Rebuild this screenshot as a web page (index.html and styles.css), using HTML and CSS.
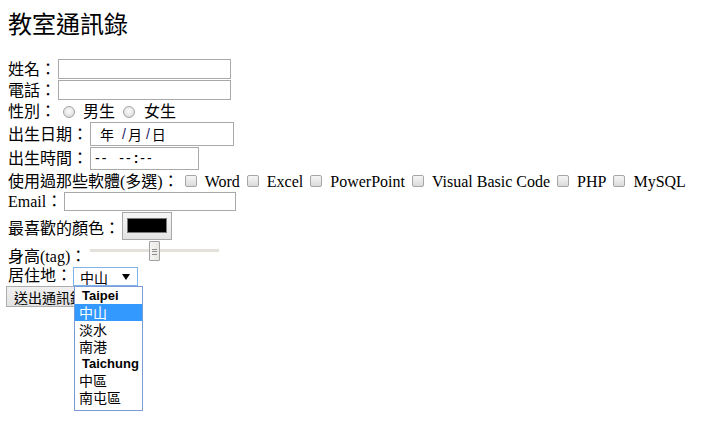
FILE: index.html
```html
<!DOCTYPE html>
<html lang="zh-Hant">
<head>
<meta charset="utf-8">
<title>教室通訊錄</title>
<link rel="stylesheet" href="styles.css">
</head>
<body>
<form class="page">
  <h2 class="title">教室通訊錄</h2>

  <div class="row row-name">
    <span class="lbl">姓名：</span><input class="text w-name" type="text">
  </div>
  <div class="row row-tel">
    <span class="lbl">電話：</span><input class="text w-name" type="text">
  </div>
  <div class="row row-sex">
    <span class="lbl">性別：</span>
    <span class="radio radio-first"></span><span class="lbl">男生</span>
    <span class="radio radio-next"></span><span class="lbl">女生</span>
  </div>
  <div class="row row-date">
    <span class="lbl">出生日期：</span>
    <div class="field date">
      <span>年</span><span class="sl sl-1">/</span><span class="d-m">月</span><span class="sl sl-2">/</span><span class="d-d">日</span>
    </div>
  </div>
  <div class="row row-time">
    <span class="lbl">出生時間：</span>
    <div class="field time">
      <span class="dash">--</span><span class="dash dash-2">--</span><span class="colon">:</span><span class="dash">--</span>
    </div>
  </div>
  <div class="row row-soft">
    <span class="lbl lbl-latin">使用過那些軟體(多選)：</span>
    <span class="cb cb-first"></span><span class="lbl lbl-latin">Word</span>
    <span class="cb"></span><span class="lbl lbl-latin">Excel</span>
    <span class="cb"></span><span class="lbl lbl-latin">PowerPoint</span>
    <span class="cb"></span><span class="lbl lbl-latin">Visual Basic Code</span>
    <span class="cb"></span><span class="lbl lbl-latin">PHP</span>
    <span class="cb"></span><span class="lbl lbl-latin">MySQL</span>
  </div>
  <div class="row row-email">
    <span class="lbl lbl-latin">Email：</span><input class="text w-email" type="text">
  </div>
  <div class="row row-color">
    <span class="lbl lbl-color">最喜歡的顏色：</span>
    <div class="color-btn"><span class="swatch"></span></div>
  </div>
  <div class="row row-range">
    <span class="lbl lbl-range">身高(tag)：</span>
    <div class="range">
      <div class="track"></div>
      <div class="thumb"><span class="grip"></span></div>
    </div>
  </div>
  <div class="row row-city">
    <span class="lbl lbl-city">居住地：</span>
    <div class="select">
      <span class="sel-value">中山</span><span class="arrow"></span>
      <div class="dropdown">
        <div class="group">Taipei</div>
        <div class="opt active">中山</div>
        <div class="opt">淡水</div>
        <div class="opt">南港</div>
        <div class="group">Taichung</div>
        <div class="opt">中區</div>
        <div class="opt">南屯區</div>
      </div>
    </div>
  </div>
  <div class="row row-submit">
    <button class="submit" type="button">送出通訊錄</button>
  </div>
</form>
</body>
</html>
```

FILE: styles.css
```css
html, body {
  margin: 0;
  background: #fff;
}

html {
  height: 100%;
}

body {
  min-height: 100%;
  font-family: "Liberation Serif", "Noto Sans CJK TC", serif;
  font-size: 16px;
  color: #000;
}

.page {
  min-height: 417px;
  padding: 11px 8px 0;
}

.title {
  margin: 0 0 23px;
  font-family: "Noto Sans CJK TC", sans-serif;
  font-weight: normal;
  font-size: 24px;
  line-height: 24px;
}

.row {
  display: flex;
  align-items: center;
  white-space: nowrap;
}

.lbl {
  padding-top: 2px;
  line-height: 16px;
}

.lbl-latin {
  padding-top: 1px;
}

.row-name { height: 21px; }
.row-tel { height: 22px; }
.row-sex { height: 20px; }
.row-date { height: 25px; }
.row-time { height: 24px; }
.row-soft { height: 22px; }
.row-email { height: 19px; }
.row-color { height: 29px; }
.row-range { height: 26px; align-items: flex-end; }
.row-city { height: 20px; align-items: flex-start; }
.row-submit { height: 22px; align-items: flex-start; }

/* text inputs */
.text {
  box-sizing: border-box;
  margin: 0 0 0 2px;
  padding: 0 2px;
  height: 20px;
  border: 1px solid #a9a9a9;
  background: #fff;
  font: 14px "Liberation Sans", sans-serif;
  outline: none;
}

.w-name { width: 173px; }
.w-email { width: 172px; height: 19px; }

/* radios */
.radio {
  box-sizing: border-box;
  width: 12px;
  height: 12px;
  border: 1px solid #a4a4a4;
  border-radius: 50%;
  background: radial-gradient(circle at 50% 40%, #fbfbfb 0, #e6e6e6 55%, #cfcfcf 100%);
}

.radio-first { margin: 1px 8px 0 7px; }
.radio-next { margin: 1px 9px 0 8px; }

/* date / time fields */
.field {
  box-sizing: border-box;
  margin-left: 2px;
  border: 1px solid #a9a9a9;
  background: #fff;
  display: flex;
  align-items: center;
  font-family: "Noto Sans CJK TC", sans-serif;
  font-size: 14px;
  line-height: 16px;
}

.date {
  width: 144px;
  height: 24px;
  padding-left: 9px;
}

.sl {
  font-family: "Liberation Sans", sans-serif;
  color: #1a1a66;
}

.sl-1 { margin-left: 8px; }
.d-m { margin-left: 2px; }
.sl-2 { margin-left: 4px; }
.d-d { margin-left: 2px; }

.time {
  width: 109px;
  height: 23px;
  padding-left: 4px;
  font-family: "Liberation Sans", sans-serif;
}

.dash { letter-spacing: 2px; }
.dash-2 { margin-left: 11px; }
.colon { margin: 0 2px 0 1px; font-weight: bold; }

/* checkboxes */
.cb {
  box-sizing: border-box;
  width: 12px;
  height: 12px;
  margin: 0 8px 1px 7px;
  border: 1px solid #a6a6a6;
  border-radius: 2px;
  background: linear-gradient(#f6f6f6, #dadada);
}

.cb-first {
  margin-left: 6px;
}

/* color picker */
.lbl-color {
  padding-top: 7px;
}

.color-btn {
  box-sizing: border-box;
  width: 50px;
  height: 28px;
  margin-left: 2px;
  border: 1px solid #a8a8a8;
  background: linear-gradient(#f7f7f7, #e3e3e3);
  display: flex;
  align-items: center;
  justify-content: center;
}

.swatch {
  box-sizing: border-box;
  width: 40px;
  height: 15px;
  border: 1px solid #7a7a7a;
  background: #000;
}

/* range */
.lbl-range {
  margin-bottom: 1px;
}

.range {
  position: relative;
  width: 129px;
  height: 21px;
  margin: 0 0 4px 4px;
}

.track {
  margin-top: 8px;
  height: 3px;
  background: #e4e0da;
}

.thumb {
  position: absolute;
  left: 59px;
  top: 0;
  box-sizing: border-box;
  width: 11px;
  height: 20px;
  border: 1px solid #a0a0a0;
  border-radius: 1px;
  background: linear-gradient(90deg, #f4f4f2, #e9e8e4);
}

.grip {
  position: absolute;
  left: 2px;
  right: 2px;
  top: 7px;
  height: 4px;
  border-top: 1px solid #8c8c8c;
  border-bottom: 1px solid #8c8c8c;
}

.grip::after {
  content: "";
  position: absolute;
  left: 0;
  right: 0;
  top: 1px;
  height: 1px;
  background: #8c8c8c;
}

/* select */
.lbl-city {
  padding-top: 2px;
}

.select {
  position: relative;
  box-sizing: border-box;
  width: 65px;
  height: 19px;
  margin: 1px 0 0 1px;
  padding: 0 7px 0 6px;
  border: 1px solid #7eb4ea;
  background: #fff;
  display: flex;
  align-items: center;
  justify-content: space-between;
  font-family: "Noto Sans CJK TC", sans-serif;
  font-size: 14px;
  line-height: 16px;
}

.arrow {
  width: 0;
  height: 0;
  border-left: 4px solid transparent;
  border-right: 4px solid transparent;
  border-top: 6px solid #000;
}

.dropdown {
  position: absolute;
  left: 0;
  top: 18px;
  z-index: 2;
  box-sizing: border-box;
  width: 69px;
  height: 125px;
  border: 1px solid #7b9bd6;
  background: #fff;
}

.group,
.opt {
  height: 17px;
  line-height: 17px;
}

.group {
  padding-left: 7px;
  font-family: "Liberation Sans", sans-serif;
  font-weight: bold;
  font-size: 13px;
}

.opt {
  padding-left: 4px;
  font-size: 14px;
}

.opt.active {
  background: #3399ff;
  color: #fff;
}

/* submit */
.submit {
  box-sizing: border-box;
  width: 86px;
  height: 21px;
  margin: 0 0 0 -2px;
  padding: 0 7px;
  border: 1px solid #adadad;
  background: linear-gradient(#f0f0f0, #e2e2e2);
  text-align: left;
  font-family: "Noto Sans CJK TC", sans-serif;
  font-size: 14px;
  line-height: 16px;
  color: #000;
}
```
